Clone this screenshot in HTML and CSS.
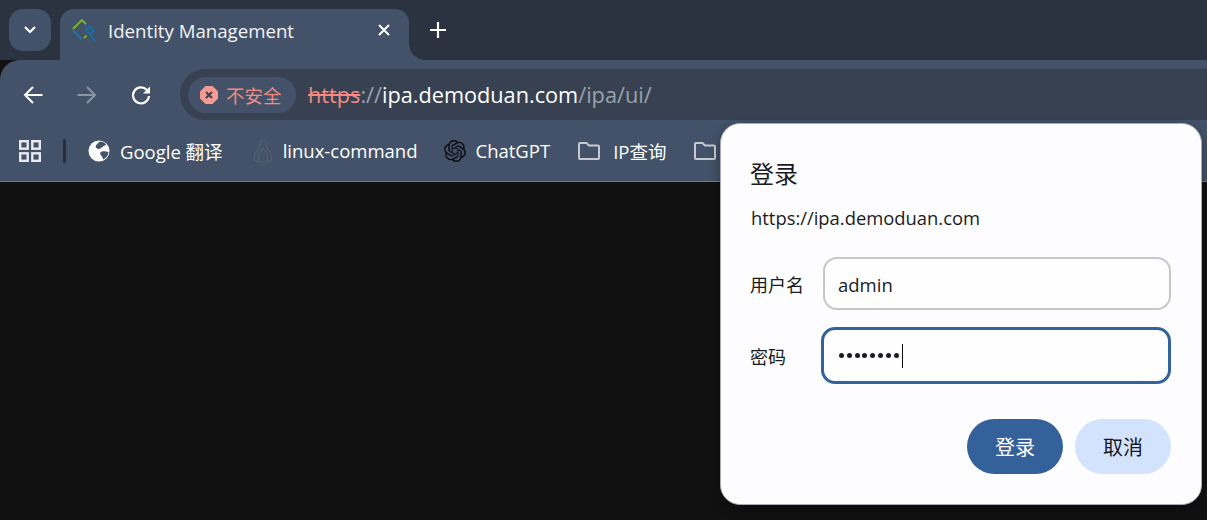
FILE: index.html
```html
<!DOCTYPE html>
<html lang="zh">
<head>
<meta charset="utf-8">
<title>Identity Management</title>
<link rel="stylesheet" href="styles.css">
</head>
<body>
<div class="browser">
  <div class="tabstrip">
    <div class="tabsearch">
      <svg width="14" height="10" viewBox="0 0 14 10"><path d="M2 2l5 5 5-5" fill="none" stroke="#fff" stroke-width="2.2"/></svg>
    </div>
    <div class="tab">
      <svg class="favicon" width="24" height="24" viewBox="0 0 24 24" fill="none" stroke-width="1.8">
        <path d="M1 10L10 1l4 4" stroke="#76b82a"/>
        <path d="M1 11.500L10 20.500" stroke="#1f78a8"/>
        <path d="M12 19l2.500-2.500" stroke="#76b82a"/>
        <path d="M18 15l-4.500-4.500L17 7l5 5-4 3.500 5.500 7" stroke="#1070a8"/>
      </svg>
      <span class="tabtitle">Identity Management</span>
      <svg class="tabclose" width="12" height="12" viewBox="0 0 12 12"><path d="M1 1l10 10M11 1L1 11" stroke="#fff" stroke-width="2"/></svg>
    </div>
    <svg class="newtab" width="16" height="16" viewBox="0 0 16 16"><path d="M8 0v16M0 8h16" stroke="#fff" stroke-width="2.200"/></svg>
  </div>
  <div class="toolbar">
    <svg class="navicon" width="22" height="22" viewBox="0 0 22 22" fill="none" stroke="#fff" stroke-width="2"><path d="M20.500 11H3M11 3l-8 8 8 8"/></svg>
    <svg class="navicon" width="22" height="22" viewBox="0 0 22 22" fill="none" stroke="#8b95a3" stroke-width="2"><path d="M1.500 11H19M11 3l8 8-8 8"/></svg>
    <svg class="navicon" width="22" height="22" viewBox="0 0 22 22" fill="none" stroke="#fff" stroke-width="2.200"><path d="M19 12a8 8 0 1 1-2.300-6.300L19 8"/><path d="M20 2.500V9.500h-7z" fill="#fff" stroke="none"/></svg>
    <div class="omnibox">
      <div class="chip">
        <svg width="18" height="18" viewBox="0 0 18 18"><path d="M5.500 0h7L18 5.500v7L12.500 18h-7L0 12.500v-7z" fill="#f49a92"/><path d="M6 6l6 6M12 6l-6 6" stroke="#3a4250" stroke-width="2"/></svg>
        <span>不安全</span>
      </div>
      <div class="url"><span class="scheme">https</span><span class="dim">://</span><span class="host">ipa.demoduan.com</span><span class="dim">/ipa/ui/</span></div>
    </div>
  </div>
  <div class="bookmarks">
    <svg class="apps" width="22" height="22" viewBox="0 0 22 22" fill="none" stroke="#e8eaed" stroke-width="2.400"><rect x="1.200" y="1.200" width="7.500" height="7.500"/><rect x="13.300" y="1.200" width="7.500" height="7.500"/><rect x="1.200" y="13.300" width="7.500" height="7.500"/><rect x="13.300" y="13.300" width="7.500" height="7.500"/></svg>
    <span class="sep"></span>
    <div class="bm bm-google">
      <svg width="22" height="22" viewBox="0 0 22 22"><circle cx="11" cy="11" r="10.500" fill="#fff"/><path d="M12 1.500c2.500 0 5 1.200 6.200 3-1.200 1.300-3 1.500-4.200 2.700-1.500 1.500-3 2.300-5 1.300s-1.500-3 0-4.300 2-2.200 3-2.700zM20.500 12c-.2 3.300-2.300 6.300-5.300 7.500-.7-1.500-1-3-2.200-4.200s-1.300-3.300 1-3.800 4-.2 6.500.5z" fill="#465469"/></svg>
      <span>Google 翻译</span>
    </div>
    <div class="bm bm-linux">
      <svg width="20" height="24" viewBox="0 0 20 24" fill="none" stroke="#566070" stroke-width="1.100"><path d="M10 1c-2.200 0-3 2-3 4 0 3-1.500 4.500-3.500 7.500S1 19 1.500 21l4 2h9l4-2c.5-2-.1-5.500-2-8.500S13 8 13 5c0-2-.8-4-3-4z"/><path d="M6 22c-1.500-4-.5-8.500 4-12.500 4.500 4 5.500 8.500 4 12.500"/></svg>
      <span>linux-command</span>
    </div>
    <div class="bm bm-gpt">
      <svg width="22" height="22" viewBox="0 0 24 24"><path fill="#0d0d12" d="M22.2819 9.8211a5.9847 5.9847 0 0 0-.5157-4.9108 6.0462 6.0462 0 0 0-6.5098-2.9A6.0651 6.0651 0 0 0 4.9807 4.1818a5.9847 5.9847 0 0 0-3.9977 2.9 6.0462 6.0462 0 0 0 .7427 7.0966 5.98 5.98 0 0 0 .511 4.9107 6.051 6.051 0 0 0 6.5146 2.9001A5.9847 5.9847 0 0 0 13.2599 24a6.0557 6.0557 0 0 0 5.7718-4.2058 5.9894 5.9894 0 0 0 3.9977-2.9001 6.0557 6.0557 0 0 0-.7475-7.0729zm-9.022 12.6081a4.4755 4.4755 0 0 1-2.8764-1.0408l.1419-.0804 4.7783-2.7582a.7948.7948 0 0 0 .3927-.6813v-6.7369l2.02 1.1686a.071.071 0 0 1 .038.052v5.5826a4.504 4.504 0 0 1-4.4945 4.4944zm-9.6607-4.1254a4.4708 4.4708 0 0 1-.5346-3.0137l.142.0852 4.783 2.7582a.7712.7712 0 0 0 .7806 0l5.8428-3.3685v2.3324a.0804.0804 0 0 1-.0332.0615L9.74 19.9502a4.4992 4.4992 0 0 1-6.1408-1.6464zM2.3408 7.8956a4.485 4.485 0 0 1 2.3655-1.9728V11.6a.7664.7664 0 0 0 .3879.6765l5.8144 3.3543-2.0201 1.1685a.0757.0757 0 0 1-.071 0l-4.8303-2.7865A4.504 4.504 0 0 1 2.3408 7.872zm16.5963 3.8558L13.1038 8.364 15.1192 7.2a.0757.0757 0 0 1 .071 0l4.8303 2.7913a4.4944 4.4944 0 0 1-.6765 8.1042v-5.6772a.79.79 0 0 0-.407-.667zm2.0107-3.0231l-.142-.0852-4.7735-2.7818a.7759.7759 0 0 0-.7854 0L9.409 9.2297V6.8974a.0662.0662 0 0 1 .0284-.0615l4.8303-2.7866a4.4992 4.4992 0 0 1 6.6802 4.66zM8.3065 12.863l-2.02-1.1638a.0804.0804 0 0 1-.038-.0567V6.0742a4.4992 4.4992 0 0 1 7.3757-3.4537l-.142.0805L8.704 5.459a.7948.7948 0 0 0-.3927.6813zm1.0976-2.3654l2.602-1.4998 2.6069 1.4998v2.9994l-2.5974 1.4997-2.6067-1.4997Z"/></svg>
      <span>ChatGPT</span>
    </div>
    <div class="bm bm-folder">
      <svg width="24" height="20" viewBox="0 0 24 20" fill="none" stroke="#c7cbd1" stroke-width="2"><path d="M2 3a1 1 0 0 1 1-1h6.500l2.500 2.500h9a1 1 0 0 1 1 1V17a1 1 0 0 1-1 1H3a1 1 0 0 1-1-1z"/></svg>
      <span>IP查询</span>
    </div>
    <div class="bm bm-folder">
      <svg width="24" height="20" viewBox="0 0 24 20" fill="none" stroke="#c7cbd1" stroke-width="2"><path d="M2 3a1 1 0 0 1 1-1h6.500l2.500 2.500h9a1 1 0 0 1 1 1V17a1 1 0 0 1-1 1H3a1 1 0 0 1-1-1z"/></svg>
    </div>
  </div>
  <div class="content"></div>

  <div class="dialog">
    <h1 class="dlg-title">登录</h1>
    <p class="dlg-origin">https://ipa.demoduan.com</p>
    <div class="field field-user">
      <label class="flabel">用户名</label>
      <div class="input">admin</div>
    </div>
    <div class="field field-pass">
      <label class="flabel flabel-pass">密码</label>
      <div class="input input-focus"><span class="dots"><i></i><i></i><i></i><i></i><i></i><i></i><i></i><i></i></span><span class="caret"></span></div>
    </div>
    <div class="actions">
      <div class="btn btn-primary">登录</div>
      <div class="btn btn-secondary">取消</div>
    </div>
  </div>
</div>
</body>
</html>
```
FILE: styles.css
```css
* { box-sizing: border-box; }
html, body { margin: 0; height: 100%; }
body {
  background: #111111;
  overflow: hidden;
  font-family: "Open Sans", "Noto Sans CJK SC", sans-serif;
  color: #fff;
}
.browser { position: relative; width: 1207px; height: 520px; display: flex; flex-direction: column; }

.tabstrip {
  height: 60px;
  background: #2b3240;
  display: flex;
  align-items: flex-start;
  padding: 9px 0 0 9px;
  flex: none;
}
.tabsearch {
  width: 42px; height: 42px;
  background: #435268;
  border-radius: 14px;
  display: flex; align-items: center; justify-content: center;
  margin-right: 9px;
}
.tab {
  position: relative;
  width: 349px; height: 51px;
  background: #435268;
  border-radius: 14px 14px 0 0;
  display: flex; align-items: center;
  padding: 0 19px 7px 12px;
}
.tab::after {
  content: "";
  position: absolute;
  right: -16px; bottom: 0;
  width: 16px; height: 16px;
  background: radial-gradient(circle at 100% 0, transparent 15.500px, #435268 16px);
}
.favicon { flex: none; }
.tabtitle {
  margin-left: 12px;
  margin-top: -2px;
  font-size: 18.650px;
  flex: 1;
  color: #f1f3f6;
}
.tabclose { flex: none; margin-bottom: 2px; }
.newtab { margin: 13px 0 0 21px; }

.toolbar {
  height: 60px;
  background: #435268;
  border-radius: 20px 0 0 0;
  display: flex;
  align-items: center;
  padding: 9px 0 0 22px;
  flex: none;
  gap: 32px;
}
.omnibox {
  flex: 1;
  height: 51px;
  margin-left: -4px;
  background: #374151;
  border-radius: 26px 0 0 26px;
  display: flex; align-items: center;
  padding-left: 8px;
}
.chip {
  height: 36px;
  width: 108px;
  background: #435268;
  border-radius: 18px;
  display: flex; align-items: center;
  padding-left: 12px;
  color: #f28b82;
  font-size: 18.500px;
  gap: 8px;
  font-family: "Noto Sans CJK SC", sans-serif;
  flex: none;
}
.url { margin-left: 12px; font-size: 21.700px; white-space: nowrap; }
.scheme { color: #f28b82; text-decoration: line-through; }
.dim { color: #9aa3ae; }
.host { color: #fff; }

.bookmarks {
  height: 62px;
  background: #435268;
  border-bottom: 1px solid #6f7d90;
  display: flex; align-items: center;
  padding: 0 0 0 19px;
  flex: none;
  font-size: 18.500px;
}
.apps { flex: none; }
.sep { width: 3px; height: 24px; background: #272e3a; border-radius: 2px; margin: 0 22px 0 22px; flex: none; }
.bm { display: flex; align-items: center; flex: none; color: #fff; white-space: nowrap; }
.bm-google { gap: 10px; margin-right: 30px; }
.bm-linux { gap: 10px; margin-right: 27px; }
.bm-gpt { gap: 9px; margin-right: 27px; }
.bm-folder { gap: 12px; margin-right: 27px; }

.content { flex: 1; background: #111111; }

.dialog {
  position: absolute;
  left: 720px; top: 123px;
  width: 482px; height: 382px;
  background: #fdfdff;
  border: 1px solid #a8abb2;
  border-radius: 20px;
  box-shadow: 0 4px 12px rgba(0,0,0,.35);
  color: #1a1c22;
  padding: 33px 30px 0 29px;
}
.dlg-title { margin: 0; font-size: 24px; font-weight: 400; line-height: 32px; font-family: "Noto Sans CJK SC", sans-serif; }
.dlg-origin { margin: 16px 0 0 1px; font-size: 18.400px; line-height: 26px; }
.field { display: flex; align-items: center; }
.field-user { margin-top: 26px; }
.field-pass { margin-top: 17px; }
.flabel { width: 73px; flex: none; font-size: 18px; font-family: "Noto Sans CJK SC", sans-serif; }
.flabel-pass { width: 71px; }
.input {
  width: 348px; height: 53px;
  border: 2px solid #c6c7cc;
  border-radius: 14px;
  padding: 1px 0 0 13px;
  font-size: 18.500px;
  display: flex; align-items: center;
  background: #fefefe;
}
.input-focus { border: 3px solid #34629a; width: 351px; height: 57px; padding: 0 0 0 15px; }
.dots { display: flex; gap: 2.800px; }
.dots i { width: 5px; height: 5px; border-radius: 50%; background: #1a1c22; display: block; }
.caret { width: 1px; height: 24px; background: #111; margin-left: 3px; }
.actions { display: flex; justify-content: flex-end; gap: 12px; margin-top: 35px; }
.btn {
  width: 96px; height: 55px;
  border-radius: 28px;
  display: flex; align-items: center; justify-content: center;
  font-size: 20px;
  font-family: "Noto Sans CJK SC", sans-serif;
}
.btn-primary { background: #35619a; color: #fff; }
.btn-secondary { background: #d4e3fd; color: #14181f; }
```
